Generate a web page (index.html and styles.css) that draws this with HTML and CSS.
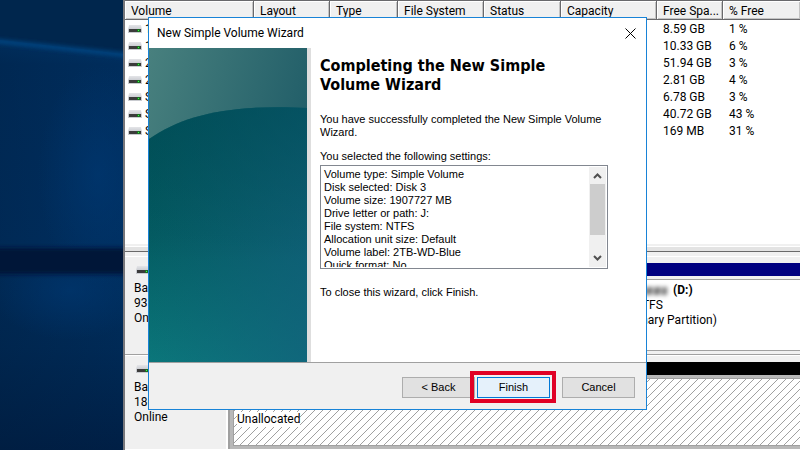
FILE: index.html
```
<!DOCTYPE html>
<html lang="en">

<head>
    <meta charset="UTF-8">
    <meta name="viewport" content="width=device-width, initial-scale=1.0">
    <title>New Simple Volume Wizard</title>
    <link rel="stylesheet" href="styles.css">
</head>

<body>
    <!-- shared shapes -->
    <svg class="defs" aria-hidden="true">
        <defs>
            <linearGradient id="lid" x1="0" y1="0" x2="0" y2="1">
                <stop offset="0" stop-color="#e4e5e8" />
                <stop offset="1" stop-color="#c6c8ce" />
            </linearGradient>
            <symbol id="drive" viewBox="0 0 14 8">
                <path d="M1 0h12l1 5H0z" fill="url(#lid)" />
                <path d="M0 4h14v4H0z" fill="#c9cbd0" />
                <path d="M1 4h12v3H1z" fill="#3b3b3b" />
                <path d="M9 4h3v3H9z" fill="#1c6b22" />
                <path d="M10 5h1v1h-1z" fill="#3dff4a" />
            </symbol>
            <pattern id="hatch" width="8" height="8" patternUnits="userSpaceOnUse">
                <path d="M0 7h1v1H0zM1 6h1v1H1zM2 5h1v1H2zM3 4h1v1H3zM4 3h1v1H4zM5 2h1v1H5zM6 1h1v1H6zM7 0h1v1H7z" fill="#a0a0a0" />
            </pattern>
        </defs>
    </svg>

    <div class="screen">
        <div class="desktop">
            <svg viewBox="0 0 123 450" preserveAspectRatio="none" aria-hidden="true">
                <defs>
                    <linearGradient id="wall" x1="0" y1="0" x2="0" y2="1">
                        <stop offset="0" stop-color="#003467" />
                        <stop offset="0.06" stop-color="#002d5c" />
                        <stop offset="0.5" stop-color="#002f60" />
                        <stop offset="0.75" stop-color="#002a56" />
                        <stop offset="1" stop-color="#001f45" />
                    </linearGradient>
                    <radialGradient id="glow">
                        <stop offset="0" stop-color="#003b78" stop-opacity="0.5" />
                        <stop offset="1" stop-color="#003b78" stop-opacity="0" />
                    </radialGradient>
                    <linearGradient id="shade">
                        <stop offset="0" stop-color="#001c3c" stop-opacity="0.3" />
                        <stop offset="1" stop-color="#001c3c" stop-opacity="0" />
                    </linearGradient>
                    <filter id="soft" filterUnits="userSpaceOnUse" x="-20" y="0" width="163" height="450"><feGaussianBlur stdDeviation="2" /></filter>
                </defs>
                <rect width="123" height="450" fill="#00264d" />
                <path d="M0 40L123 54V450H0z" fill="url(#wall)" />
                <path d="M0 40L123 54V450H0z" fill="url(#shade)" />
                <ellipse cx="98" cy="175" rx="60" ry="110" fill="url(#glow)" />
                <ellipse cx="70" cy="290" rx="80" ry="50" fill="url(#glow)" />
                <path d="M-5 41L128 55" stroke="#044684" stroke-width="4" filter="url(#soft)" />
                <rect x="-10" y="248" width="143" height="26" fill="#001838" filter="url(#soft)" />
            </svg>
        </div>

        <div class="manager">
            <div class="volumes">
                <table>
                    <thead>
                        <tr>
                            <th class="col-volume">Volume</th>
                            <th class="col-layout">Layout</th>
                            <th class="col-type">Type</th>
                            <th class="col-fs">File System</th>
                            <th class="col-status">Status</th>
                            <th class="col-capacity">Capacity</th>
                            <th class="col-space">Free Spa...</th>
                            <th>% Free</th>
                        </tr>
                    </thead>
                    <tbody>
                        <tr><td><svg class="drive"><use href="#drive" /></svg>1</td><td colspan="5"></td><td>8.59 GB</td><td>1 %</td></tr>
                        <tr><td><svg class="drive"><use href="#drive" /></svg>1</td><td colspan="5"></td><td>10.33 GB</td><td>6 %</td></tr>
                        <tr><td><svg class="drive"><use href="#drive" /></svg>2</td><td colspan="5"></td><td>51.94 GB</td><td>3 %</td></tr>
                        <tr><td><svg class="drive"><use href="#drive" /></svg>2</td><td colspan="5"></td><td>2.81 GB</td><td>4 %</td></tr>
                        <tr><td><svg class="drive"><use href="#drive" /></svg>S</td><td colspan="5"></td><td>6.78 GB</td><td>3 %</td></tr>
                        <tr><td><svg class="drive"><use href="#drive" /></svg>S</td><td colspan="5"></td><td>40.72 GB</td><td>43 %</td></tr>
                        <tr><td><svg class="drive"><use href="#drive" /></svg>S</td><td colspan="5"></td><td>169 MB</td><td>31 %</td></tr>
                    </tbody>
                </table>
            </div>
            <div class="splitter"></div>

            <div class="disk">
                <div class="disk-info">
                    <svg class="drive"><use href="#drive" /></svg>
                    <p>Basic</p>
                    <p>931</p>
                    <p>Online</p>
                </div>
                <div class="disk-map">
                    <div class="bar primary"></div>
                    <div class="partition">
                        <p><span class="smudge"></span><b>(D:)</b></p>
                        <p>931.39 GB NTFS</p>
                        <p>Healthy (Primary Partition)</p>
                    </div>
                </div>
            </div>

            <div class="disk last">
                <div class="disk-info">
                    <svg class="drive"><use href="#drive" /></svg>
                    <p>Basic</p>
                    <p>186</p>
                    <p>Online</p>
                </div>
                <div class="disk-map">
                    <div class="bar unallocated"></div>
                    <div class="free-space">
                        <svg class="hatch" aria-hidden="true"><rect width="100%" height="100%" fill="url(#hatch)" /></svg>
                        <span>Unallocated</span>
                    </div>
                </div>
            </div>
        </div>
    </div>

    <div class="wizard" role="dialog" aria-labelledby="wizard-title">
        <div class="titlebar">
            <span id="wizard-title">New Simple Volume Wizard</span>
            <button class="close" type="button" aria-label="Close">
                <svg viewBox="0 0 11 11"><path d="M0.5 0.5l10 10M10.5 0.5l-10 10" /></svg>
            </button>
        </div>
        <div class="page">
            <svg class="banner" viewBox="0 0 158 314" preserveAspectRatio="none" aria-hidden="true">
                <defs>
                    <linearGradient id="top" x1="0" y1="0" x2="1" y2="0.5">
                        <stop offset="0" stop-color="#48807e" />
                        <stop offset="1" stop-color="#1d5a66" />
                    </linearGradient>
                    <linearGradient id="hill" x1="0" y1="0" x2="0" y2="1">
                        <stop offset="0" stop-color="#005055" />
                        <stop offset="0.5" stop-color="#045c62" />
                        <stop offset="1" stop-color="#0b767a" />
                    </linearGradient>
                    <linearGradient id="side">
                        <stop offset="0" stop-color="#12607c" stop-opacity="0" />
                        <stop offset="1" stop-color="#12607c" stop-opacity="0.7" />
                    </linearGradient>
                    <linearGradient id="fade" x1="0" y1="0" x2="0" y2="1">
                        <stop offset="0" stop-color="#004c58" stop-opacity="0.6" />
                        <stop offset="0.6" stop-color="#004c58" stop-opacity="0" />
                    </linearGradient>
                </defs>
                <rect width="158" height="314" fill="url(#top)" />
                <path d="M0 91C35 66 85 56 158 60V314H0z" fill="url(#hill)" />
                <path d="M0 91C35 66 85 56 158 60V314H0z" fill="url(#side)" />
                <path d="M0 91C35 66 85 56 158 60V314H0z" fill="url(#fade)" />
            </svg>
            <div class="content">
                <h1>Completing the New Simple Volume Wizard</h1>
                <p>You have successfully completed the New Simple Volume Wizard.</p>
                <label for="settings">You selected the following settings:</label>
                <div class="listbox">
                    <textarea id="settings" readonly>Volume type: Simple Volume
Disk selected: Disk 3
Volume size: 1907727 MB
Drive letter or path: J:
File system: NTFS
Allocation unit size: Default
Volume label: 2TB-WD-Blue
Quick format: No</textarea>
                    <div class="scrollbar">
                        <svg viewBox="0 0 9 6"><path d="M1 5l3.500-3.500L8 5" /></svg>
                        <div class="track"><div class="thumb"></div></div>
                        <svg viewBox="0 0 9 6"><path d="M1 1l3.500 3.500L8 1" /></svg>
                    </div>
                </div>
                <p>To close this wizard, click Finish.</p>
            </div>
        </div>
        <div class="footer">
            <button type="button">&lt; Back</button>
            <span class="highlight"><button class="default" type="button">Finish</button></span>
            <button class="cancel" type="button">Cancel</button>
        </div>
    </div>
</body>

</html>
```
FILE: styles.css
```
* {
    box-sizing: border-box;
}

body {
    margin: 0;
    overflow: hidden;
    background: #f0f0f0;
    color: #000;
    font: 12px/15px Roboto, "Open Sans", sans-serif;
}

p {
    margin: 0;
}

.defs {
    position: absolute;
    width: 0;
    height: 0;
}

.screen {
    display: flex;
    height: 100vh;
}

.desktop {
    flex: 0 0 123px;
}

.desktop svg {
    display: block;
    width: 100%;
    height: 100%;
}

.drive {
    display: inline-block;
    width: 14px;
    height: 8px;
}

/* disk management window */
.manager {
    flex: 1;
    display: flex;
    flex-direction: column;
    min-width: 0;
    border-left: 2px solid #77777b;
}

.volumes {
    flex: 0 0 244px;
    background: #fff;
}

table {
    width: 100%;
    border-collapse: separate;
    border-spacing: 0;
    table-layout: fixed;
}

th {
    height: 20px;
    padding: 2px 0 0 6px;
    border: solid #69696c;
    border-width: 1px 1px 1px 0;
    background: #f0f0f0;
    box-shadow: inset 1px 1px #fff, inset -1px -1px #c4c4c4;
    font-weight: normal;
    text-align: left;
    white-space: nowrap;
}

th:last-child {
    border-right: 0;
}

.col-volume { width: 129px; }
.col-layout { width: 76px; }
.col-type { width: 68px; }
.col-fs { width: 86px; }
.col-status { width: 77px; }
.col-capacity { width: 96px; }
.col-space { width: 66px; }

td {
    height: 17px;
    padding: 2px 0 0 6px;
    white-space: nowrap;
}

td:first-child {
    padding-left: 3px;
}

td .drive {
    margin-right: 3px;
}

.splitter {
    flex: 0 0 12px;
    border-top: 2px solid #f0f0f0;
    background: linear-gradient(#fff 1px, #e3e3e3 1px, #e3e3e3 5px, #696969 5px, #696969 6px, #f0f0f0 6px);
}

.disk {
    flex: 0 0 99px;
    display: flex;
    border-top: 1px solid #fff;
    border-bottom: 1px solid #a0a0a0;
}

.last {
    flex-basis: 95px;
    border-bottom-color: #fff;
}

.disk-info {
    flex: 0 0 103px;
    padding: 9px 0 0 9px;
    border-right: 2px solid #fff;
}

.disk-info .drive {
    display: block;
    margin: 0 0 7px 2px;
}

.disk-map {
    flex: 1;
    display: flex;
    flex-direction: column;
    padding: 6px 0 3px 3px;
    border-left: 2px solid #a0a0a0;
}

.bar {
    flex: 0 0 13px;
}

.primary {
    background: #000080;
}

.unallocated {
    background: #000;
}

.partition {
    flex: 1;
    margin-top: 3px;
    padding: 3px 0 0 341px;
    border: 1px solid #a0a0a0;
    border-right: 0;
    background: #fff;
    white-space: nowrap;
}

/* volume name is smeared out */
.smudge {
    display: inline-block;
    width: 92px;
    height: 8px;
    margin-right: 6px;
    background: repeating-linear-gradient(100deg, #555 0, #888 4px, #ddd 6px, #777 8px);
    filter: blur(2px);
    vertical-align: -1px;
}

.free-space {
    position: relative;
    flex: 1;
    margin-top: 3px;
    border: 1px solid #a0a0a0;
    border-right: 0;
    background: #fff;
    box-shadow: 0 0 0 3px #b8b8b8;
}

.hatch {
    display: block;
    position: absolute;
    width: 100%;
    height: 100%;
}

.free-space span {
    display: inline-block;
    position: relative;
    margin: 33px 0 0 3px;
    background: #fff;
}

/* wizard */
.wizard {
    position: absolute;
    top: 17px;
    left: 148px;
    width: 499px;
    border: 1px solid #1883d7;
    background: #fff;
}

.titlebar {
    display: flex;
    justify-content: space-between;
    align-items: center;
    height: 30px;
    padding: 0 10px 0 8px;
}

.close {
    display: flex;
    padding: 0;
    border: 0;
    background: none;
}

.close svg {
    width: 11px;
    height: 11px;
    stroke: #000;
    fill: none;
}

.page {
    display: flex;
    height: 314px;
    font: 11px/13px "Liberation Sans", Arial, sans-serif;
}

.banner {
    flex: none;
    width: 158px;
    height: 314px;
    box-shadow: 4px 0 #dedede;
}

.content {
    flex: 1;
    padding: 8px 38px 0 13px;
}

h1 {
    margin: 0 0 19px;
    font: bold 16px/19px "DejaVu Sans Condensed", Verdana, sans-serif;
}

label {
    display: block;
    margin: 11px 0 2px;
}

.listbox {
    display: flex;
    height: 104px;
    margin-bottom: 17px;
    padding: 1px;
    border: 1px solid #828790;
}

textarea {
    flex: 1;
    min-width: 0;
    padding: 1px 2px 0;
    border: 0;
    outline: 0;
    background: none;
    color: inherit;
    font: inherit;
    overflow: hidden;
    resize: none;
}

.scrollbar {
    display: flex;
    flex-direction: column;
    align-items: center;
    width: 17px;
    padding: 6px 0;
    background: #f0f0f0;
}

.scrollbar svg {
    width: 9px;
    height: 6px;
    fill: none;
    stroke: #505050;
    stroke-width: 2;
}

.track {
    flex: 1;
    width: 15px;
    padding: 5px 0;
}

.thumb {
    height: 51px;
    background: #cdcdcd;
}

.footer {
    display: flex;
    justify-content: flex-end;
    padding: 14px 11px 11px;
    border-top: 1px solid #a0a0a0;
    background: #f0f0f0;
}

.footer button {
    width: 73px;
    height: 21px;
    padding: 0;
    border: 1px solid #adadad;
    background: #e1e1e1;
    color: #000;
    font: 11px/13px "Liberation Sans", Arial, sans-serif;
}

.footer .default {
    border-color: #0078d7;
    background: #e5f1fb;
}

.footer .cancel {
    margin-left: 12px;
}

.highlight {
    position: relative;
    margin-left: 2px;
}

/* red frame around the button to press */
.highlight::after {
    content: "";
    position: absolute;
    inset: -6px -6px -5px -7px;
    border: 4px solid #e00025;
    pointer-events: none;
}
```
